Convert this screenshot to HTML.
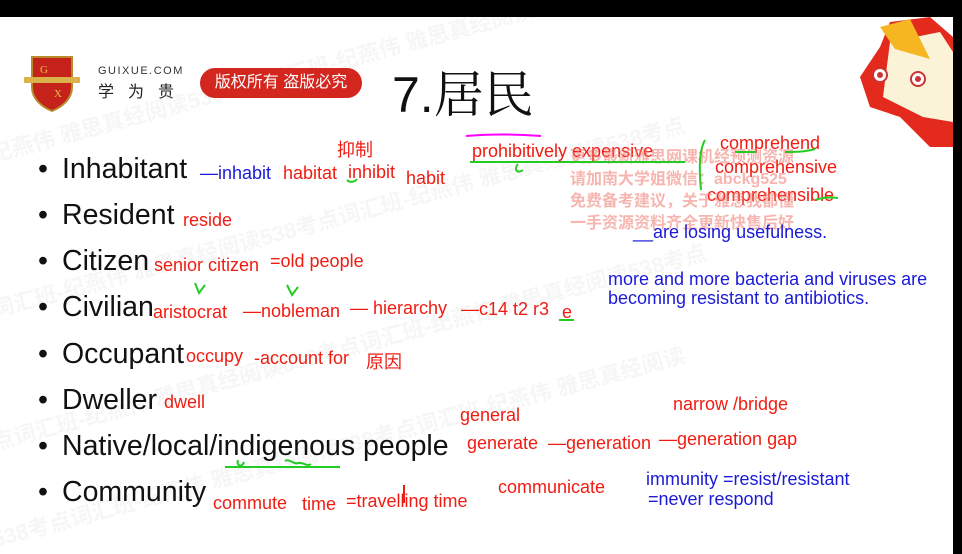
<!DOCTYPE html>
<html><head><meta charset="utf-8"><style>
html,body{margin:0;width:962px;height:554px;overflow:hidden}
body{background:#fff;position:relative;font-family:"Liberation Sans","Noto Sans CJK SC",sans-serif}
.a{position:absolute;white-space:nowrap}
.r{color:#f01c12;font-size:18px}
.b{color:#1a1ad8;font-size:18px}
.m{font-size:28.5px;color:#111;left:38px}
.m span{display:inline-block;width:24px}
.wm{position:absolute;color:rgba(180,180,180,0.12);font-size:22px;font-weight:bold;transform:rotate(-15deg);white-space:nowrap}
</style></head><body>
<div class="wm" style="left:-20px;top:60px">纪燕伟 雅思真经阅读538考点词汇班-纪燕伟 雅思真经阅读538</div>
<div class="wm" style="left:-20px;top:200px">词汇班-纪燕伟 雅思真经阅读538考点词汇班-纪燕伟 雅思真经阅读538考点</div>
<div class="wm" style="left:-20px;top:330px">点词汇班-纪燕伟 雅思真经阅读538考点词汇班-纪燕伟 雅思真经阅读538考点</div>
<div class="wm" style="left:-20px;top:430px">538考点词汇班-纪燕伟 雅思真经阅读538考点词汇班-纪燕伟 雅思真经阅读</div>
<div class="a" style="left:0;top:0;width:962px;height:17px;background:#000"></div>
<div class="a" style="left:953px;top:0;width:9px;height:554px;background:#000"></div>
<svg class="a" style="left:20px;top:55px" width="64" height="58" viewBox="0 0 64 58"><path d="M12 2h40v30c0 12-10 20-20 24C22 52 12 44 12 32z" fill="#c4221a" stroke="#b88a2a" stroke-width="2"/><rect x="4" y="22" width="56" height="6" fill="#d9b24a"/><text x="20" y="18" font-size="11" fill="#e8c04a" font-family="Liberation Serif">G</text><text x="34" y="42" font-size="11" fill="#e8c04a" font-family="Liberation Serif">X</text></svg>
<div class="a" style="left:98px;top:65px;font-size:11px;letter-spacing:1.5px;color:#333">GUIXUE.COM</div>
<div class="a" style="left:98px;top:78px;font-size:16px;letter-spacing:14px;color:#222">学为贵</div>
<div class="a" style="left:200px;top:68px;width:162px;height:30px;border-radius:15px;background:#d2261e;color:#fff;font-size:16px;line-height:30px;text-align:center">版权所有 盗版必究</div>
<div class="a" style="left:392px;top:55px;font-size:50px;color:#111;font-family:'Liberation Sans','Noto Serif CJK SC',sans-serif">7.居民</div>
<svg class="a" style="left:860px;top:17px" width="93" height="130" viewBox="0 0 93 130"><path d="M20 30L30 5 70 0 93 20V130H70L40 100 10 90 0 60z" fill="#e42a1c"/><path d="M30 25l50-10 13 20v70l-30-5-40-20z" fill="#fbf3d8"/><path d="M20 10l30-8 20 40-35-10z" fill="#f6b622"/><circle cx="58" cy="62" r="7" fill="#fff" stroke="#c33" stroke-width="2"/><circle cx="20" cy="58" r="7" fill="#fff" stroke="#c33" stroke-width="2"/><circle cx="58" cy="62" r="3" fill="#c33"/><circle cx="20" cy="58" r="3" fill="#c33"/></svg>
<div class="a m" style="top:153px"><span>•</span>Inhabitant</div>
<div class="a m" style="top:199px"><span>•</span>Resident</div>
<div class="a m" style="top:245px"><span>•</span>Citizen</div>
<div class="a m" style="top:291px"><span>•</span>Civilian</div>
<div class="a m" style="top:338px"><span>•</span>Occupant</div>
<div class="a m" style="top:384px"><span>•</span>Dweller</div>
<div class="a m" style="top:430px"><span>•</span>Native/local/indigenous people</div>
<div class="a m" style="top:476px"><span>•</span>Community</div>
<div class="a b" style="left:200px;top:163px">—inhabit</div>
<div class="a r" style="left:283px;top:163px">habitat</div>
<div class="a r" style="left:348px;top:162px">inhibit</div>
<div class="a r" style="left:406px;top:168px">habit</div>
<div class="a r" style="left:337px;top:136px">抑制</div>
<div class="a r" style="left:472px;top:141px">prohibitively expensive</div>
<div class="a r" style="left:720px;top:133px">comprehend</div>
<div class="a r" style="left:715px;top:157px">comprehensive</div>
<div class="a r" style="left:707px;top:185px">comprehensible</div>
<div class="a" style="left:570px;top:147px;font-size:16px;font-weight:bold;color:rgba(240,120,110,0.55);line-height:22px">更多最新雅思网课机经预测资源<br>请加南大学姐微信：abckg525<br>免费备考建议，关于雅思我都懂<br>一手资源资料齐全更新快售后好</div>
<div class="a b" style="left:633px;top:222px">__are losing usefulness.</div>
<div class="a b" style="left:608px;top:270px;line-height:19px">more and more bacteria and viruses are<br>becoming resistant to antibiotics.</div>
<div class="a r" style="left:183px;top:210px">reside</div>
<div class="a r" style="left:154px;top:255px">senior citizen</div>
<div class="a r" style="left:270px;top:251px">=old people</div>
<div class="a r" style="left:153px;top:302px">aristocrat</div>
<div class="a r" style="left:243px;top:301px">—nobleman</div>
<div class="a r" style="left:350px;top:298px">— hierarchy</div>
<div class="a r" style="left:461px;top:299px">—c14 t2 r3</div>
<div class="a r" style="left:562px;top:302px">e</div>
<div class="a r" style="left:186px;top:346px">occupy</div>
<div class="a r" style="left:254px;top:348px">-account for</div>
<div class="a r" style="left:366px;top:348px">原因</div>
<div class="a r" style="left:164px;top:392px">dwell</div>
<div class="a r" style="left:460px;top:405px">general</div>
<div class="a r" style="left:467px;top:433px">generate</div>
<div class="a r" style="left:548px;top:433px">—generation</div>
<div class="a r" style="left:659px;top:429px">—generation gap</div>
<div class="a r" style="left:673px;top:394px">narrow /bridge</div>
<div class="a r" style="left:213px;top:493px">commute</div>
<div class="a r" style="left:302px;top:494px">time</div>
<div class="a r" style="left:346px;top:491px">=travelling time</div>
<div class="a r" style="left:498px;top:477px">communicate</div>
<div class="a b" style="left:646px;top:469px">immunity =resist/resistant</div>
<div class="a b" style="left:648px;top:489px">=never respond</div>
<svg class="a" style="left:0;top:0" width="962" height="554"><g fill="none" stroke="#22cc22" stroke-width="2"><path d="M470 162H685"/><path d="M518 164c-5 6 0 10 5 6"/><path d="M705 140c-6 10-6 30-4 50"/><path d="M735 152h20M785 152c10 0 20 0 30-3"/><path d="M815 200c8-3 15-3 23-2"/><path d="M347 180c3 3 8 2 10-1"/><path d="M195 283l4 10 6-8"/><path d="M287 285l5 10 6-8"/><path d="M559 320h15"/><path d="M225 467H340"/><path d="M238 460c-2 6 4 8 6 2M285 461c5-3 8 4 14 2 4-1 8 4 12 1"/></g><path d="M466 136q35-3 75 0" stroke="#f0f" stroke-width="2" fill="none"/><path d="M404 485v18" stroke="#f01c12" stroke-width="2"/></svg>
</body></html>
